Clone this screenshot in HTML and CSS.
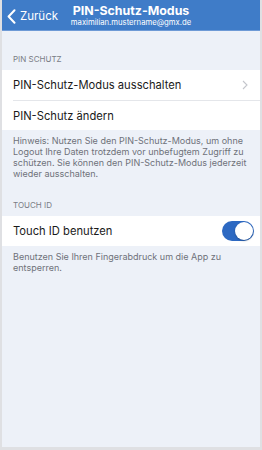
FILE: index.html
```html
<!DOCTYPE html>
<html lang="de">
<head>
<meta charset="utf-8">
<link rel="stylesheet" href="styles.css">
</head>
<body>
<div class="frame">
  <header class="nav">
    <div class="back">
      <svg class="back-icon" width="9" height="15" viewBox="0 0 9 15"><path d="M7.5 1.2 L1.6 7.5 L7.5 13.8" fill="none" stroke="#fff" stroke-width="2" stroke-linecap="round" stroke-linejoin="round"/></svg>
      <span>Zurück</span>
    </div>
    <div class="titles">
      <div class="title">PIN-Schutz-Modus</div>
      <div class="subtitle">maximilian.mustername@gmx.de</div>
    </div>
  </header>
  <main class="content">
    <div class="section-label first">PIN SCHUTZ</div>
    <div class="group">
      <div class="row">
        <span>PIN-Schutz-Modus ausschalten</span>
        <svg class="chevron" width="6" height="10" viewBox="0 0 6 10"><path d="M1 1 L5 5 L1 9" fill="none" stroke="#c4c6cc" stroke-width="1.1"/></svg>
      </div>
      <div class="row sep">
        <span>PIN-Schutz ändern</span>
      </div>
    </div>
    <p class="note">Hinweis: Nutzen Sie den PIN-Schutz-Modus, um ohne Logout Ihre Daten trotzdem vor unbefugtem Zugriff zu schützen. Sie können den PIN-Schutz-Modus jederzeit wieder ausschalten.</p>
    <div class="section-label">TOUCH ID</div>
    <div class="group">
      <div class="row">
        <span>Touch ID benutzen</span>
        <div class="toggle"><div class="knob"></div></div>
      </div>
    </div>
    <p class="note">Benutzen Sie Ihren Fingerabdruck um die App zu entsperren.</p>
  </main>
</div>
</body>
</html>
```

FILE: styles.css
```css
html, body {
  margin: 0;
  padding: 0;
}
body {
  width: 262px;
  height: 450px;
  background: #dfe0e3;
  font-family: "Inter", "Liberation Sans", sans-serif;
  overflow: hidden;
}
.frame {
  margin: 0 2px;
  height: 447px;
  background: #edf1f8;
  display: flex;
  flex-direction: column;
}
.nav {
  height: 30px;
  flex: none;
  background: #3f7cc8;
  border-bottom: 1px solid #6e9ad6;
  display: flex;
  align-items: center;
  position: relative;
  color: #fff;
}
.back {
  display: flex;
  align-items: center;
  gap: 4px;
  padding-left: 5px;
  font-size: 11.5px;
  padding-top: 2px;
}
.back-icon {
  display: block;
}
.titles {
  position: absolute;
  left: 0;
  right: 0;
  top: 4px;
  text-align: center;
}
.title {
  font-size: 12.4px;
  font-weight: 700;
  line-height: 14px;
}
.subtitle {
  font-size: 7.7px;
  line-height: 10px;
}
.content {
  flex: 1;
}
.section-label {
  font-size: 8px;
  color: #7a7d85;
  padding: 21px 11px 6px;
  line-height: 10px;
}
.section-label.first {
  padding-top: 23px;
}
.group {
  background: #fff;
}
.row {
  height: 30px;
  margin-left: 11px;
  padding-right: 12px;
  display: flex;
  align-items: center;
  justify-content: space-between;
  font-size: 11.2px;
  color: #1a1a1a;
}
.row.sep {
  border-top: 1px solid #e4e6ea;
  height: 29px;
}
.chevron {
  display: block;
}
.toggle {
  width: 32px;
  height: 20px;
  border-radius: 10px;
  background: #2d69c2;
  position: relative;
  margin-right: -6px;
}
.knob {
  position: absolute;
  right: 1px;
  top: 1px;
  width: 18px;
  height: 18px;
  border-radius: 50%;
  background: #fff;
  box-shadow: 0 1px 2px rgba(0,0,0,0.25);
}
.note {
  margin: 0;
  padding: 5px 11px 0;
  font-size: 9px;
  line-height: 11px;
  color: #6f727a;
}
```
